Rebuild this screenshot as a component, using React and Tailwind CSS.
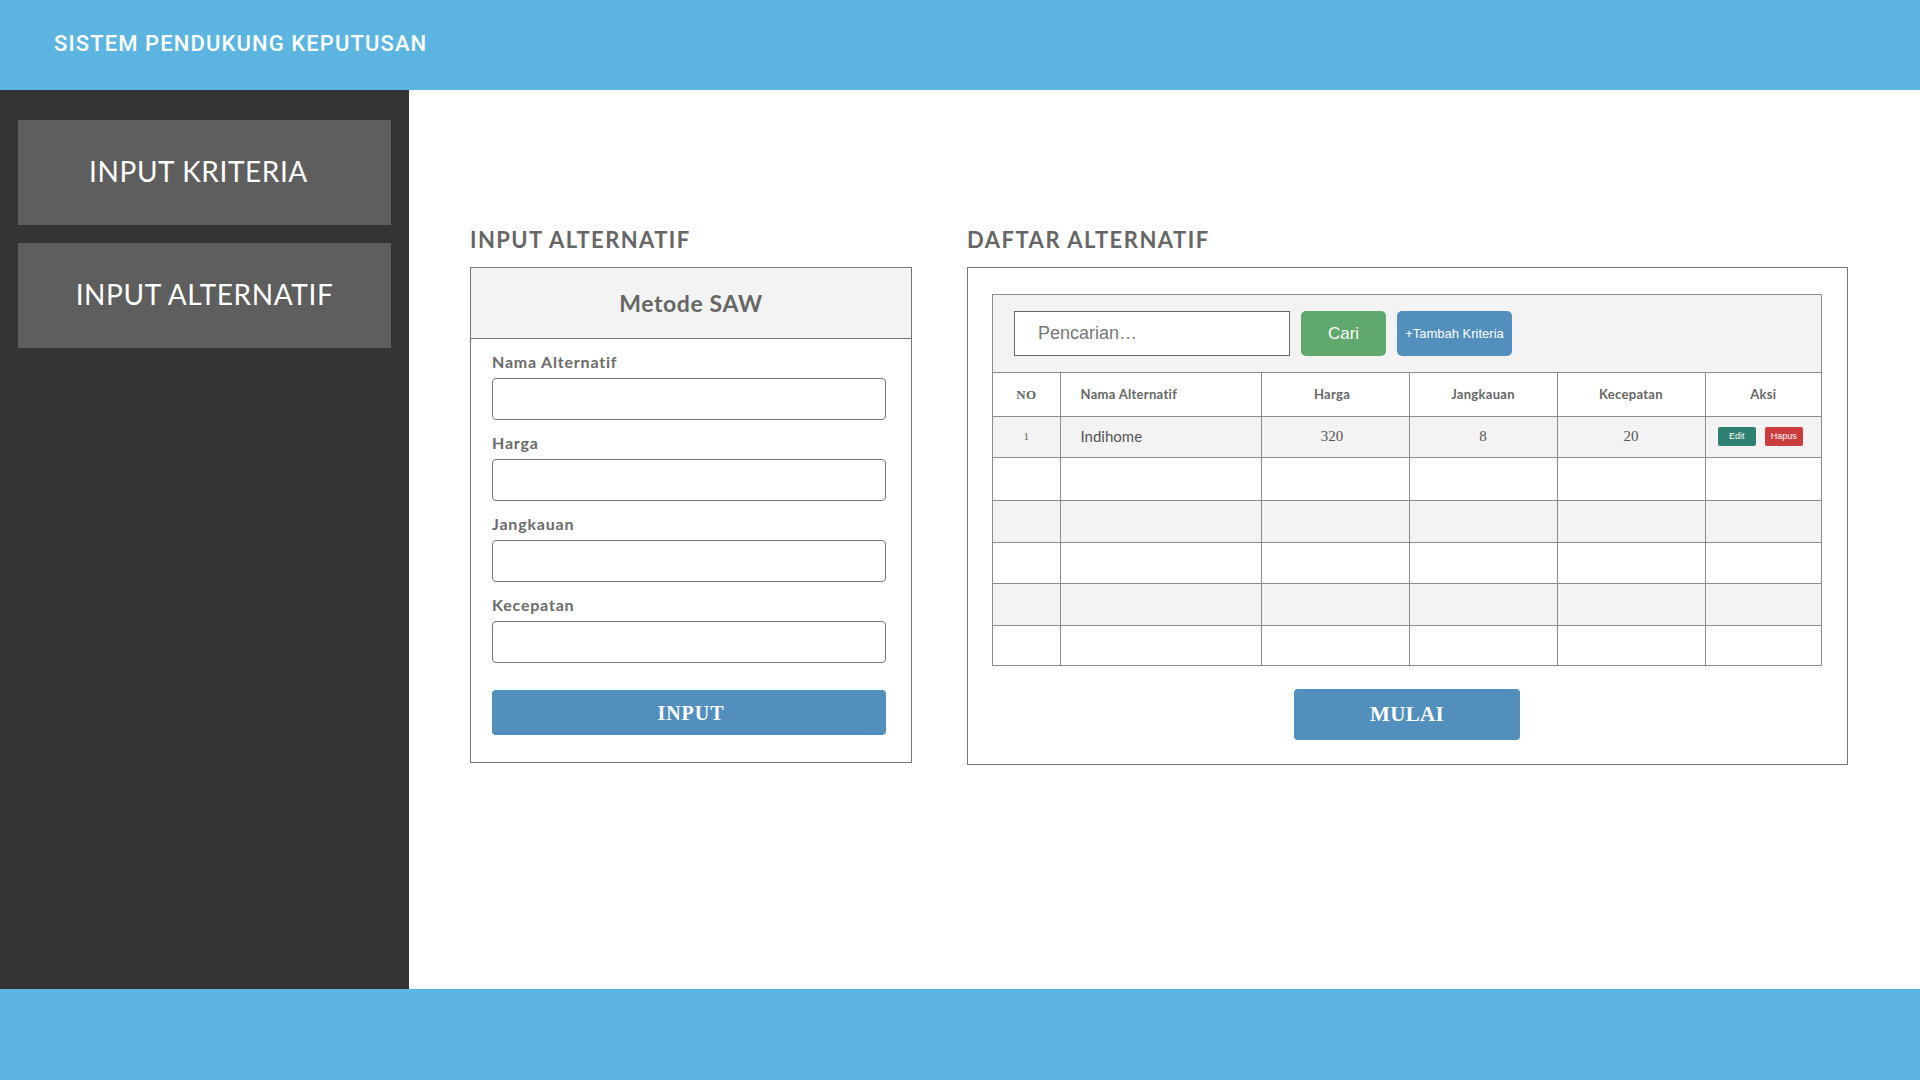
import React from 'react';

const sans = { fontFamily: 'Lato, "Open Sans", sans-serif' };
const serif = { fontFamily: '"Liberation Serif", serif' };
const arial = { fontFamily: '"Liberation Sans", Arial, sans-serif' };

const columns = [
  { label: 'NO', w: 'w-[67px]', align: 'text-center', serif: true },
  { label: 'Nama Alternatif', w: 'w-[201px]', align: 'text-left pl-[20px]' },
  { label: 'Harga', w: 'w-[148px]', align: 'text-center pr-[6px]' },
  { label: 'Jangkauan', w: 'w-[148px]', align: 'text-center' },
  { label: 'Kecepatan', w: 'w-[148px]', align: 'text-center' },
  { label: 'Aksi', w: '', align: 'text-center' },
];

const rowHeights = ['h-[41px]', 'h-[43px]', 'h-[42px]', 'h-[41px]', 'h-[42px]', 'h-[40px]'];

const fields = ['Nama Alternatif', 'Harga', 'Jangkauan', 'Kecepatan'];

function Sidebar() {
  return (
    <aside className="w-[409px] shrink-0 bg-[#343434] px-[18px] pt-[30px] flex flex-col gap-[18px]">
      {['INPUT KRITERIA', 'INPUT ALTERNATIF'].map((t, i) => (
        <button
          key={t}
          className={`h-[105px] w-full bg-[#5e5e5e] text-white text-[28px] tracking-[0.6px] pb-[3px] ${i === 0 ? 'pr-[12px]' : ''}`}
          style={sans}
        >
          {t}
        </button>
      ))}
    </aside>
  );
}

function InputForm() {
  return (
    <div className="w-[442px] shrink-0">
      <h2 className="text-[22px] leading-[28px] font-bold text-[#666] tracking-[1.4px] mb-[13px] -mt-[1px]" style={sans}>
        INPUT ALTERNATIF
      </h2>
      <div className="border border-[#777] bg-white">
        <div className="h-[71px] bg-[#f3f3f3] border-b border-[#777] flex items-center justify-center">
          <span className="text-[23px] font-bold text-[#666] tracking-[0.6px]" style={sans}>Metode SAW</span>
        </div>
        <div className="pl-[21px] pr-[25px] pt-[13px] pb-[27px]">
          {fields.map((f, i) => (
            <div key={f} className={i > 0 ? 'mt-[13px]' : ''}>
              <label className="block text-[16px] leading-[20px] font-bold text-[#6b6b6b] tracking-[0.8px]" style={sans}>{f}</label>
              <input className="mt-[6px] block w-full h-[42px] border border-[#777] rounded-[4px] bg-white outline-none" />
            </div>
          ))}
          <button
            className="mt-[27px] w-full h-[45px] rounded-[4px] bg-[#528fbc] text-white text-[20px] font-bold tracking-[1px] pl-[4px]"
            style={serif}
          >
            INPUT
          </button>
        </div>
      </div>
    </div>
  );
}

function AlternatifList() {
  return (
    <div className="w-[881px] shrink-0">
      <h2 className="text-[22px] leading-[28px] font-bold text-[#666] tracking-[1.5px] mb-[13px] -mt-[1px]" style={sans}>
        DAFTAR ALTERNATIF
      </h2>
      <div className="border border-[#777] bg-white pl-[24px] pr-[25px] pt-[26px] pb-[24px]">
        <div className="border border-[#8c8c8c]">
          {/* toolbar */}
          <div className="bg-[#f3f3f3] border-b border-[#8c8c8c] pl-[21px] py-[16px] flex items-center gap-[11px]">
            <div className="w-[276px] h-[45px] border border-[#666] bg-white flex items-center pl-[23px]">
              <span className="text-[18px] text-[#777]" style={arial}>Pencarian…</span>
            </div>
            <button className="w-[85px] h-[45px] rounded-[5px] bg-[#5fa86e] text-white text-[17px]" style={arial}>
              Cari
            </button>
            <button className="w-[115px] h-[45px] rounded-[5px] bg-[#528fbc] text-white text-[13px]" style={arial}>
              +Tambah Kriteria
            </button>
          </div>
          {/* table */}
          <table className="w-full border-collapse table-fixed">
            <thead>
              <tr className="h-[43px] bg-white">
                {columns.map((c, i) => (
                  <th
                    key={c.label}
                    className={`${c.w} ${c.align} text-[13px] font-bold text-[#666] tracking-[0.3px] border-[#8c8c8c] ${i > 0 ? 'border-l' : ''}`}
                    style={c.serif ? serif : sans}
                  >
                    {c.label}
                  </th>
                ))}
              </tr>
            </thead>
            <tbody>
              {rowHeights.map((h, r) => (
                <tr key={r} className={`${h} ${r % 2 === 0 ? 'bg-[#f3f3f3]' : 'bg-white'} border-t border-[#8c8c8c]`}>
                  {r === 0 ? (
                    <>
                      <td className="text-center text-[11px] text-[#666]" style={serif}>1</td>
                      <td className="border-l border-[#8c8c8c] pl-[20px] text-[15px] text-[#555]" style={sans}>Indihome</td>
                      <td className="border-l border-[#8c8c8c] text-center pr-[6px] text-[15px] text-[#555]" style={serif}>320</td>
                      <td className="border-l border-[#8c8c8c] text-center text-[15px] text-[#555]" style={serif}>8</td>
                      <td className="border-l border-[#8c8c8c] text-center text-[15px] text-[#555]" style={serif}>20</td>
                      <td className="border-l border-[#8c8c8c]">
                        <div className="flex items-center justify-center gap-[9px] pr-[6px]">
                          <button className="w-[38px] h-[19px] rounded-[2px] bg-[#2e8070] text-white text-[9px]" style={arial}>
                            Edit
                          </button>
                          <button className="w-[38px] h-[19px] rounded-[2px] bg-[#cc3b3d] text-white text-[9px]" style={arial}>
                            Hapus
                          </button>
                        </div>
                      </td>
                    </>
                  ) : (
                    columns.map((c, i) => (
                      <td key={c.label} className={i > 0 ? 'border-l border-[#8c8c8c]' : ''} />
                    ))
                  )}
                </tr>
              ))}
            </tbody>
          </table>
        </div>
        <div className="flex justify-center mt-[23px]">
          <button
            className="w-[226px] h-[51px] rounded-[4px] bg-[#528fbc] text-white text-[21px] font-bold tracking-[0.3px]"
            style={serif}
          >
            MULAI
          </button>
        </div>
      </div>
    </div>
  );
}

export default function App() {
  return (
    <div className="w-full h-screen flex flex-col bg-white">
      <header className="h-[90px] shrink-0 bg-[#5cb5e1] flex items-center pl-[54px] pb-[4px]">
        <h1
          className="text-white text-[22px] font-medium tracking-[1.1px]"
          style={{ fontFamily: 'Roboto, "Liberation Sans", sans-serif' }}
        >
          SISTEM PENDUKUNG KEPUTUSAN
        </h1>
      </header>

      <div className="flex-1 flex min-h-0">
        <Sidebar />
        <main className="flex-1 pl-[61px] pt-[137px] flex gap-[55px]">
          <InputForm />
          <AlternatifList />
        </main>
      </div>

      <footer className="h-[91px] shrink-0 bg-[#5cb5e1]" />
    </div>
  );
}
